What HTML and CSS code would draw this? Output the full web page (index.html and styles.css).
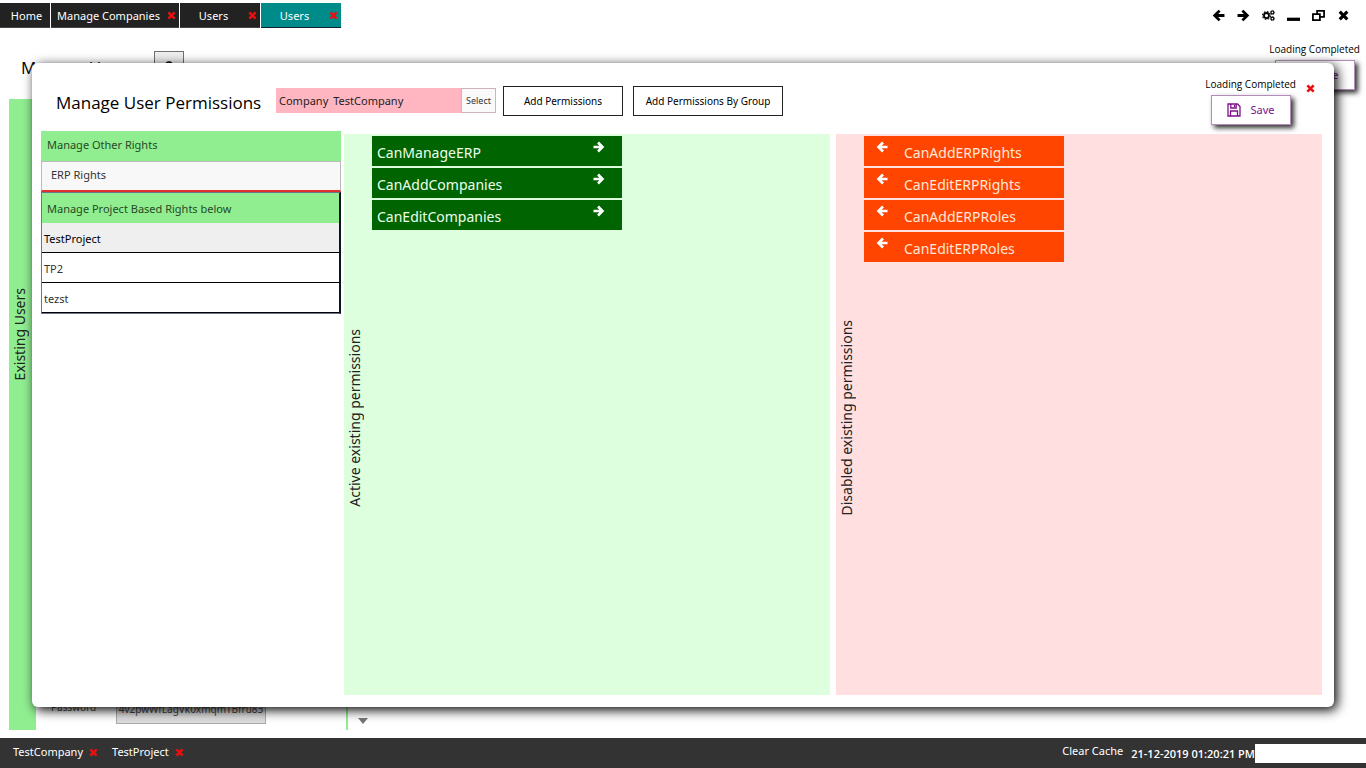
FILE: index.html
```html
<!DOCTYPE html>
<html lang="en">
<head>
<meta charset="utf-8">
<title>Manage User Permissions</title>
<link rel="stylesheet" href="styles.css">
</head>
<body>
<svg class="defs" aria-hidden="true">
  <symbol id="cross" viewBox="0 0 10 10"><path d="M1.500 1.500l7 7M8.500 1.500l-7 7" fill="none" stroke="currentColor" stroke-width="2.900"/></symbol>
  <symbol id="right" viewBox="0 0 12 12"><path d="M.5 6h9M5 1.500L9.500 6L5 10.500" fill="none" stroke="currentColor" stroke-width="2.600"/></symbol>
  <symbol id="left" viewBox="0 0 12 12"><path d="M11.500 6h-9M7 1.500L2.500 6L7 10.500" fill="none" stroke="currentColor" stroke-width="2.600"/></symbol>
  <symbol id="floppy" viewBox="0 0 14 14"><path d="M1 1h9.500L13 3.500V13H1zM3.500 13V8h7v5M3.800 1v4h5.400V1M7.500 2v2" fill="none" stroke="currentColor" stroke-width="1.300"/></symbol>
</svg>
<header class="topbar">
  <nav class="tabs">
    <button class="tab tab-home">Home</button>
    <div class="tab tab-wide"><button class="tab-name">Manage Companies</button><button class="close" aria-label="Close Manage Companies"><svg><use href="#cross"/></svg></button></div>
    <div class="tab"><button class="tab-name">Users</button><button class="close" aria-label="Close Users"><svg><use href="#cross"/></svg></button></div>
    <div class="tab tab-active"><button class="tab-name">Users</button><button class="close" aria-label="Close current Users tab"><svg><use href="#cross"/></svg></button></div>
  </nav>
  <div class="window-tools">
    <button aria-label="Back"><svg viewBox="0 0 12 12"><use href="#left"/></svg></button>
    <button aria-label="Forward"><svg viewBox="0 0 12 12"><use href="#right"/></svg></button>
    <button aria-label="Settings"><svg viewBox="0 0 14 12"><g fill="none" stroke="currentColor"><circle cx="4.800" cy="6" r="2.700" stroke-width="1.900"/><circle cx="4.800" cy="6" r="4.200" stroke-width="1.300" stroke-dasharray="1.700 1.600"/><circle cx="11.200" cy="2.700" r="1.500" stroke-width="1.200"/><circle cx="11.200" cy="2.700" r="2.300" stroke-width=".8" stroke-dasharray="1 .8"/><circle cx="11.200" cy="9.300" r="1.500" stroke-width="1.200"/><circle cx="11.200" cy="9.300" r="2.300" stroke-width=".8" stroke-dasharray="1 .8"/></g></svg></button>
    <button aria-label="Minimize"><svg viewBox="0 0 12 12"><path d="M0 8h12v3H0z" fill="currentColor"/></svg></button>
    <button aria-label="Restore"><svg viewBox="0 0 14 12"><path d="M5.500 4.500V1h7.500v6.500H8.500M1 4.500h7.500V11H1z" fill="none" stroke="currentColor" stroke-width="1.900"/></svg></button>
    <button aria-label="Close"><svg viewBox="0 0 12 12"><path d="M2.500 2.500l7 7M9.500 2.500l-7 7" fill="none" stroke="currentColor" stroke-width="2.900"/></svg></button>
  </div>
</header>
<main class="page">
  <div class="page-head">
    <h2 class="title">Manage Users</h2>
    <button class="add" aria-label="Add user"><svg viewBox="0 0 12 12"><path d="M3 5a3 3 0 0 1 6 0" fill="none" stroke="currentColor" stroke-width="1.500"/></svg></button>
    <div class="save-group"><span class="status">Loading Completed</span><button class="save"><svg><use href="#floppy"/></svg>Save</button></div>
  </div>
  <div class="page-body">
    <div class="side existing"><span class="vertical">Existing Users</span></div>
    <div class="user-form"><label for="password">Password</label><input id="password" value="4v2pwWfLagVk0xmqmTBfru83" readonly></div>
    <div class="scroller"><svg viewBox="0 0 10 6"><path d="M0 0h10L5 6z" fill="currentColor"/></svg></div>
  </div>
  <section class="modal" role="dialog" aria-labelledby="modal-title">
    <div class="modal-head">
      <h1 class="title" id="modal-title">Manage User Permissions</h1>
      <div class="company"><span>Company</span><span class="company-name">TestCompany</span><button class="select">Select</button></div>
      <button class="outline">Add Permissions</button>
      <button class="outline outline-wide">Add Permissions By Group</button>
      <div class="save-group"><span class="status">Loading Completed</span><button class="save"><svg><use href="#floppy"/></svg>Save</button></div>
      <button class="close modal-close" aria-label="Close dialog"><svg><use href="#cross"/></svg></button>
    </div>
    <div class="modal-body">
      <aside class="rights">
        <h3 class="rights-head">Manage Other Rights</h3>
        <button class="erp">ERP Rights</button>
        <div class="projects">
          <h3 class="rights-head">Manage Project Based Rights below</h3>
          <button class="project selected">TestProject</button>
          <button class="project">TP2</button>
          <button class="project">tezst</button>
        </div>
      </aside>
      <div class="panel active-panel">
        <div class="side"><span class="vertical">Active existing permissions</span></div>
        <div class="permissions">
          <button class="permission">CanManageERP<svg><use href="#right"/></svg></button>
          <button class="permission">CanAddCompanies<svg><use href="#right"/></svg></button>
          <button class="permission">CanEditCompanies<svg><use href="#right"/></svg></button>
        </div>
      </div>
      <div class="panel disabled-panel">
        <div class="side"><span class="vertical">Disabled existing permissions</span></div>
        <div class="permissions">
          <button class="permission"><svg><use href="#left"/></svg>CanAddERPRights</button>
          <button class="permission"><svg><use href="#left"/></svg>CanEditERPRights</button>
          <button class="permission"><svg><use href="#left"/></svg>CanAddERPRoles</button>
          <button class="permission"><svg><use href="#left"/></svg>CanEditERPRoles</button>
        </div>
      </div>
    </div>
  </section>
</main>
<footer class="statusbar">
  <div class="crumb"><span>TestCompany</span><button class="close" aria-label="Remove TestCompany"><svg><use href="#cross"/></svg></button></div>
  <div class="crumb"><span>TestProject</span><button class="close" aria-label="Remove TestProject"><svg><use href="#cross"/></svg></button></div>
  <button class="cache">Clear Cache</button>
  <time class="clock">21-12-2019 01:20:21 PM</time>
  <div class="blank"></div>
</footer>
</body>
</html>
```
FILE: styles.css
```css
* { box-sizing: border-box; }
body {
  margin: 0;
  min-height: 100vh;
  display: flex;
  flex-direction: column;
  font: 11px/16px "Noto Sans", "Open Sans", sans-serif;
  color: #000;
  background: #fff;
}
button, input { font: inherit; color: inherit; margin: 0; padding: 0; border: 0; background: none; border-radius: 0; }
h1, h2, h3 { margin: 0; font-weight: 400; }
svg { display: block; flex: none; }
.defs { position: absolute; width: 0; height: 0; }

.topbar { display: flex; justify-content: space-between; padding: 3px 16px 0 0; }
.tabs { display: flex; gap: 1px; }
.tab { display: flex; align-items: center; width: 80px; height: 25px; background: #222; color: #fff; border-bottom: 1px solid #444; }
.tab-home { width: 50px; justify-content: center; padding-left: 3px; }
.tab-wide { width: 128px; }
.tab-active { background: #008b8b; border-color: #123; }
.tab-name { flex: 1; text-align: center; padding: 1px 0 0 2px; }
.tab-home { padding-top: 1px; }
.close { color: #e81010; padding: 3px; }
.close svg { width: 9px; height: 9px; }
.window-tools { display: flex; align-items: center; gap: 12px; }
.window-tools svg { width: 13px; height: 13px; }

.page { flex: 1; display: flex; flex-direction: column; position: relative; }
.page-head { display: flex; align-items: flex-start; height: 71px; padding: 23px 6px 0 21px; }
.title { font-family: "Open Sans", "Noto Sans", sans-serif; font-size: 17px; line-height: 24px; }
.page-head .title { width: 133px; padding-top: 5px; }
.add { display: grid; place-items: center; width: 30px; height: 30px; background: #eee; border: 1px solid #707070; }
.add svg { width: 12px; height: 12px; }
.save-group { display: flex; flex-direction: column; align-items: flex-end; gap: 3px; margin: -10px 0 0 auto; }
.status { font-family: "Open Sans", "Noto Sans", sans-serif; font-size: 10px; }
.save { display: flex; align-items: center; justify-content: center; gap: 9px; width: 80px; height: 30px; margin-right: 5px; color: #800f8a; background: #fff; border: 1px solid #b48cba; box-shadow: 3px 3px 5px #333; }
.save svg { width: 14px; height: 14px; }
.page-body { flex: 1; display: flex; padding: 0 9px 8px; }
.side { display: flex; align-items: center; justify-content: center; width: 22px; flex: none; }
.vertical { writing-mode: vertical-rl; transform: rotate(180deg); font-size: 14px; line-height: 20px; white-space: nowrap; color: #222; }
.existing { width: 27px; padding: 0 5px 160px 0; background: #90ee90; }
.user-form { flex: none; display: flex; align-items: flex-end; width: 312px; padding: 0 80px 6px 15px; border-right: 2px solid #90ee90; font-size: 10px; color: #444; }
.user-form label { width: 65px; padding-bottom: 9px; }
.user-form input { width: 150px; height: 30px; text-align: center; background: #ddd; border: 1px solid #aaa; }
.scroller { display: flex; align-items: flex-end; padding: 0 10px 6px; color: #777; }
.scroller svg { width: 10px; height: 6px; }

.modal { position: absolute; inset: 35px 32px 31px; display: flex; flex-direction: column; padding: 0 12px 12px 9px; background: #fff; border-radius: 6px; box-shadow: 3px 3px 12px #000; }
.modal-head { display: flex; align-items: flex-start; height: 68px; padding: 23px 4px 0 15px; }
.modal-head .title { width: 220px; padding-top: 5px; }
.company { display: flex; align-items: center; width: 220px; height: 25px; margin: 2px 7px 0 0; padding-left: 3px; background: #ffb6c1; color: #222; }
.company-name { flex: 1; padding-left: 5px; }
.select { width: 35px; height: 25px; font-size: 9px; background: #fafafa; border: 1px solid #ccb4b8; color: #333; }
.outline { width: 120px; height: 30px; margin-right: 10px; border: 1px solid #222; font-size: 10px; background: #fff; }
.outline-wide { width: 150px; }
.modal-close { margin: -5px 0 0 7px; }
.modal-body { flex: 1; display: flex; }
.rights { width: 300px; margin-right: 3px; flex: none; }
.rights button { display: block; width: 100%; height: 30px; text-align: left; }
.rights-head { height: 30px; padding: 6px; font-size: 11px; line-height: 16px; color: #264a26; background: #90ee90; }
.rights .erp { height: 31px; padding: 0 9px 2px; background: #f8f8f8; border: 1px solid #bbb; border-bottom: 2px solid #e03030; color: #333; }
.projects { border: 1px solid #68778c; border-right: 2px solid #0c1424; }
.projects .rights-head { padding: 8px 5px 6px; }
.rights .project { padding: 2px 0 0 2px; border-bottom: 1px solid #000; color: #333; }
.rights .selected { background: #efefef; color: #000; }
.panel { flex: 1; display: flex; margin-top: 3px; }
.active-panel { background: #dfd; margin-right: 6px; }
.disabled-panel { background: #ffdfdf; }
.panel .side { padding-top: 6px; }
.permissions { flex: 1; display: flex; flex-direction: column; align-items: flex-start; gap: 2px; padding: 2px 6px; }
.permission { display: flex; align-items: center; width: 250px; height: 30px; padding: 4px 17px 0 5px; font-size: 14px; line-height: 20px; background: #006400; color: #efe; }
.permission svg { width: 12px; height: 12px; margin: 0 0 12px auto; color: #fff; }
.disabled-panel .permission { width: 200px; padding-left: 12px; gap: 16px; background: #ff4500; color: #ffe8d8; }
.disabled-panel .permission svg { margin-left: 0; }

.statusbar { display: flex; align-items: center; height: 30px; padding-left: 13px; background: #333; color: #fff; }
.crumb { display: flex; align-items: center; gap: 3px; margin-right: 11px; padding-bottom: 2px; }
.cache { margin-left: auto; padding-bottom: 4px; }
.clock { margin-left: 8px; padding-top: 2px; font-family: "Open Sans", "Noto Sans", sans-serif; font-size: 11px; font-weight: 600; white-space: nowrap; }
.blank { width: 111px; height: 19px; background: #fff; }
```
